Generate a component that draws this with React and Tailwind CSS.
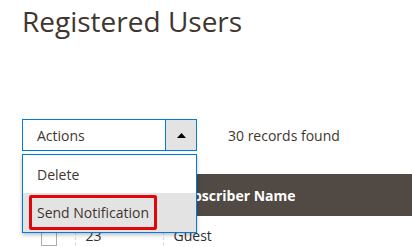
export default function App() {
  return (
    <div className="h-[247px] w-[412px] overflow-hidden bg-white font-['Open_Sans',sans-serif] text-[#303030]">
      <div className="pl-[22px] pt-[4px]">
        <h1 className="text-[28px] font-normal leading-[34px] text-[#41362f]">Registered Users</h1>

        {/* Toolbar */}
        <div className="mt-[81px] flex items-center">
          <div className="relative">
            <div className="flex h-[32px] w-[175px] border border-[#007bdb] bg-white">
              <div className="flex flex-1 items-center pl-[14px] text-[14px] text-[#41362f]">Actions</div>
              <div className="flex w-[31px] items-center justify-center border-l border-[#007bdb] bg-[#e3e3e3]">
                <svg width="9" height="5" viewBox="0 0 9 5">
                  <path d="M0 5 L4.5 0 L9 5 Z" fill="#000" />
                </svg>
              </div>
            </div>

            {/* Dropdown menu */}
            <div className="absolute left-0 top-[35px] z-10 w-[175px] border border-[#007bdb] bg-white shadow-[0_2px_4px_rgba(0,0,0,0.25)]">
              <div className="flex h-[38px] items-center pl-[14px] text-[14px] text-[#41362f]">Delete</div>
              <div className="flex h-[39px] items-center bg-[#e3e3e3] pl-[6px]">
                <div className="flex h-[35px] items-center rounded-[2px] border-[3px] border-[#e0060a] px-[5px] text-[14px] text-[#41362f]">
                  Send Notification
                </div>
              </div>
            </div>
          </div>
          <div className="ml-[31px] text-[14px] text-[#41362f]">30 records found</div>
        </div>

        {/* Grid */}
        <table className="mt-[23px] w-[400px] border-collapse text-[14px]">
          <thead>
            <tr className="h-[42px] bg-[#514943] text-left text-white">
              <th className="w-[53px]"></th>
              <th className="w-[88px]"></th>
              <th className="pl-[13px] font-bold">Subscriber Name</th>
            </tr>
          </thead>
          <tbody>
            <tr className="h-[40px] text-[#303030]">
              <td className="border-r border-dashed border-[#d6d6d6] pl-[19px] align-top pt-[14px]">
                <div className="h-[16px] w-[16px] border border-[#adadad] bg-white"></div>
              </td>
              <td className="border-r border-dashed border-[#d6d6d6] pl-[10px] align-top pt-[9px]">23</td>
              <td className="pl-[10px] align-top pt-[9px]">Guest</td>
            </tr>
          </tbody>
        </table>
      </div>
    </div>
  );
}
